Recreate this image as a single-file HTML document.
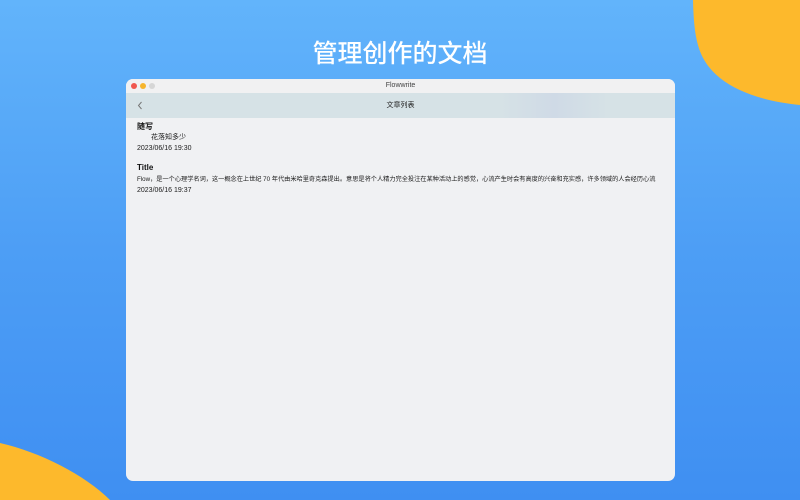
<!DOCTYPE html>
<html><head><meta charset="utf-8"><style>
*{margin:0;padding:0;box-sizing:border-box}
body{width:800px;height:500px;overflow:hidden;position:relative;background:linear-gradient(180deg,#62b4fb 0%,#4d9ef5 50%,#3f8ff2 100%);font-family:"Liberation Sans","Noto Sans CJK SC",sans-serif}
.h{position:absolute;left:0;width:800px;top:34px;text-align:center;color:#fff;font-size:25px;font-weight:500;letter-spacing:0px}
.win{position:absolute;left:126px;top:79px;width:549px;height:402px;background:#f0f1f3;border-radius:7px;overflow:hidden}
.tb{height:14px;background:#f1f1f2;text-align:center;font-size:7px;color:#444;line-height:13px}
.dot{position:absolute;top:4px;width:6px;height:6px;border-radius:50%}
.nav{height:25px;background:linear-gradient(90deg,#d6e2e6 0%,#d6e2e6 68%,#cfdae6 78%,#d6e2e6 88%,#d6e2e6 100%);position:relative;text-align:center;font-size:7px;line-height:25px;color:#222}
.c{position:absolute;font-size:7px;line-height:9px;color:#1a1a1a;white-space:nowrap}
.b{font-weight:bold;font-size:8px;color:#111}
</style></head><body>
<svg style="position:absolute;left:0;top:0" width="800" height="500">
<path d="M693 0 C694 40 698 60 720 78 C740 94 770 102 800 105 L800 0 Z" fill="#fdb92c"/>
<path d="M0 443 C40 452 85 475 110 500 L0 500 Z" fill="#fdb92c"/>
</svg>
<div class="h">管理创作的文档</div>
<div class="win">
<div class="tb">Flowwrite</div>
<div class="dot" style="left:5px;background:#f0574f"></div>
<div class="dot" style="left:14px;background:#f6b52d"></div>
<div class="dot" style="left:23px;background:#d6d6d6"></div>
<div class="nav">文章列表
<svg style="position:absolute;left:11px;top:8px" width="6" height="9"><path d="M4.5 1 L1.5 4.5 L4.5 8" stroke="#777" stroke-width="1" fill="none"/></svg></div>
<div class="c b" style="left:11px;top:43px">随写</div>
<div class="c" style="left:25px;top:54px">花落知多少</div>
<div class="c" style="left:11px;top:65px">2023/06/16 19:30</div>
<div class="c b" style="left:11px;top:84px">Title</div>
<div class="c" style="left:11px;top:96px;font-size:6.2px">Flow，是一个心理学名词，这一概念在上世纪 70 年代由米哈里奇克森提出。意思是将个人精力完全投注在某种活动上的感觉，心流产生时会有高度的兴奋和充实感，许多领域的人会经历心流</div>
<div class="c" style="left:11px;top:107px">2023/06/16 19:37</div>
</div>
</body></html>
